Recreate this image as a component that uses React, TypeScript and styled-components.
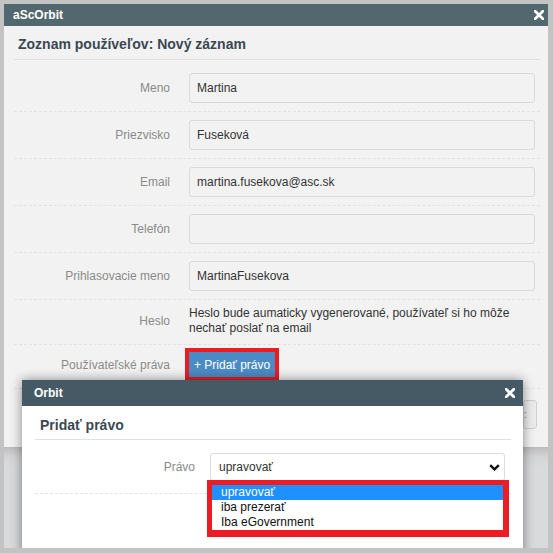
import React from "react";
import styled, { createGlobalStyle } from "styled-components";

const GlobalStyle = createGlobalStyle`
  html, body { margin: 0; padding: 0; }
  body {
    background: #c3c3c3;
    font-family: "Liberation Sans", Arial, sans-serif;
  }
  * { box-sizing: border-box; }
`;

const Screen = styled.div`
  width: 553px;
  height: 553px;
  padding: 4px;
  background: #c3c3c3;
`;

const Window = styled.div`
  position: relative;
  width: 544px;
  height: 544px;
  display: flex;
  flex-direction: column;
  overflow: hidden;
`;

const TitleBar = styled.div<{ $bg: string; $h: number; $pl: number; $pr: number }>`
  height: ${(p) => p.$h}px;
  flex-shrink: 0;
  display: flex;
  align-items: center;
  justify-content: space-between;
  padding: 0 ${(p) => p.$pr}px 0 ${(p) => p.$pl}px;
  background: ${(p) => p.$bg};
  color: #fff;
  font-size: 12px;
  font-weight: 700;
`;

const Body = styled.div`
  height: 421px;
  flex-shrink: 0;
  background: #f2f2f2;
  padding: 0 8px 0 10px;
  display: flex;
  flex-direction: column;
`;

const Heading = styled.div<{ $pl: number; $pt: number }>`
  height: 34px;
  padding: ${(p) => p.$pt}px 0 0 ${(p) => p.$pl}px;
  line-height: 20px;
  font-size: 14px;
  font-weight: 700;
  color: #3b4753;
  border-bottom: 1px solid #e0e0e0;
`;

const Form = styled.div`
  padding-top: 5px;
  display: flex;
  flex-direction: column;
`;

const FieldRow = styled.div<{ $pad?: string }>`
  display: grid;
  grid-template-columns: 156px 1fr;
  column-gap: 19px;
  align-items: center;
  padding: ${(p) => p.$pad ?? "8px 5px 8px 0"};
  border-bottom: 1px dashed #e2e2e2;
`;

const Label = styled.div`
  text-align: right;
  font-size: 12px;
  color: #8a8a8a;
`;

const Input = styled.div`
  height: 30px;
  display: flex;
  align-items: center;
  padding: 0 7px;
  background: #f2f2f2;
  border: 1px solid #dadada;
  border-radius: 3px;
  font-size: 12px;
  color: #333;
`;

const Note = styled.div`
  font-size: 12px;
  line-height: 15px;
  color: #333;
`;

const AddButton = styled.button`
  justify-self: start;
  height: 25px;
  padding: 0 5px;
  border: none;
  border-radius: 0;
  background: #4b8bc5;
  color: #fff;
  font-family: "Liberation Sans", Arial, sans-serif;
  font-size: 12px;
  box-shadow: 0 0 0 4px #ec1c24;
`;

const Footer = styled.div`
  display: flex;
  justify-content: flex-end;
  padding: 11px 3px 0 0;
`;

const GhostButton = styled.button`
  width: 14px;
  height: 29px;
  padding: 0;
  border: 1px solid #cfcfcf;
  border-radius: 3px;
  background: #ececec;
  color: #888;
  font-size: 10px;
  text-align: left;
`;

const Backdrop = styled.div`
  flex: 1;
  background: linear-gradient(#bcbcbc 0px, #d3d4d6 10px, #d9dadc 20px);
`;

const Modal = styled.div`
  position: absolute;
  left: 18px;
  top: 376px;
  width: 501px;
  height: 180px;
  display: flex;
  flex-direction: column;
  background: #fff;
  box-shadow: 0 0 12px rgba(0, 0, 0, 0.45);
  border-radius: 3px 3px 0 0;
`;

const ModalBody = styled.div`
  padding: 0 12px 0 13px;
  display: flex;
  flex-direction: column;
`;

const ModalRow = styled.div`
  display: grid;
  grid-template-columns: 160px 1fr;
  column-gap: 15px;
  align-items: center;
  padding: 13px 6px 12px 0;
  border-bottom: 1px dashed #e4e4e4;
`;

const SelectWrap = styled.div`
  position: relative;
`;

const SelectBox = styled.div`
  height: 28px;
  display: flex;
  align-items: center;
  justify-content: space-between;
  padding: 0 4px 0 8px;
  background: #fff;
  border: 1px solid #dcdcdc;
  border-radius: 3px;
  font-size: 12px;
  color: #333;
`;

const Dropdown = styled.ul`
  position: absolute;
  top: calc(100% - 1px);
  left: -3px;
  width: 302px;
  margin: 0;
  padding: 0;
  list-style: none;
  background: #fff;
  border-style: solid;
  border-color: #ec1c24;
  border-width: 5px 6px 7px 5px;
`;

const Option = styled.li<{ $active?: boolean }>`
  height: 15px;
  line-height: 15px;
  padding-left: 9px;
  font-size: 12px;
  color: ${(p) => (p.$active ? "#fff" : "#111")};
  background: ${(p) => (p.$active ? "#1e90ff" : "transparent")};
`;

const CloseIcon = () => (
  <svg width="10" height="10" viewBox="0 0 10 10" aria-hidden="true">
    <path d="M1.2 1.2 L8.8 8.8 M8.8 1.2 L1.2 8.8" stroke="#fff" strokeWidth="2.7" strokeLinecap="square" />
  </svg>
);

const Chevron = () => (
  <svg width="11" height="7" viewBox="0 0 11 7" aria-hidden="true">
    <path d="M1.2 1.2 L5.5 5.4 L9.8 1.2" fill="none" stroke="#111" strokeWidth="2.4" />
  </svg>
);

const fields: { label: string; value: string }[] = [
  { label: "Meno", value: "Martina" },
  { label: "Priezvisko", value: "Fuseková" },
  { label: "Email", value: "martina.fusekova@asc.sk" },
  { label: "Telefón", value: "" },
  { label: "Prihlasovacie meno", value: "MartinaFusekova" },
];

const options = ["upravovať", "iba prezerať", "Iba eGovernment"];

export default function App() {
  return (
    <>
      <GlobalStyle />
      <Screen>
        <Window>
          <TitleBar $bg="#53676f" $h={22} $pl={9} $pr={4}>
            <span>aScOrbit</span>
            <CloseIcon />
          </TitleBar>
          <Body>
            <Heading $pl={4} $pt={8}>Zoznam používeľov: Nový záznam</Heading>
            <Form>
              {fields.map((f) => (
                <FieldRow key={f.label}>
                  <Label>{f.label}</Label>
                  <Input>{f.value}</Input>
                </FieldRow>
              ))}
              <FieldRow $pad="6px 5px 8px 0">
                <Label>Heslo</Label>
                <Note>
                  Heslo bude aumaticky vygenerované, používateľ si ho môže nechať poslať na email
                </Note>
              </FieldRow>
              <FieldRow $pad="7px 5px 11px 0">
                <Label>Používateľské práva</Label>
                <AddButton>+ Pridať právo</AddButton>
              </FieldRow>
            </Form>
            <Footer>
              <GhostButton>:</GhostButton>
            </Footer>
          </Body>
          <Backdrop />
          <Modal>
            <TitleBar $bg="#465a66" $h={26} $pl={12} $pr={8}>
              <span>Orbit</span>
              <CloseIcon />
            </TitleBar>
            <ModalBody>
              <Heading $pl={5} $pt={9}>Pridať právo</Heading>
              <ModalRow>
                <Label>Právo</Label>
                <SelectWrap>
                  <SelectBox>
                    <span>upravovať</span>
                    <Chevron />
                  </SelectBox>
                  <Dropdown>
                    {options.map((o, i) => (
                      <Option key={o} $active={i === 0}>
                        {o}
                      </Option>
                    ))}
                  </Dropdown>
                </SelectWrap>
              </ModalRow>
            </ModalBody>
          </Modal>
        </Window>
      </Screen>
    </>
  );
}
